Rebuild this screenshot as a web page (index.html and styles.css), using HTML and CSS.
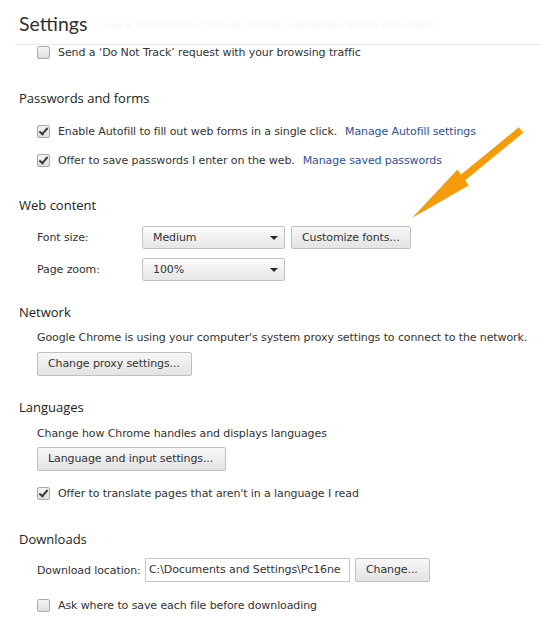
FILE: index.html
```html
<!DOCTYPE html>
<html>
<head>
<meta charset="utf-8">
<link rel="stylesheet" href="styles.css">
</head>
<body>
<div class="page">
  <header class="header">
    <h1 class="title">Settings</h1>
    <span class="ghost">Use a web service to help resolve navigation errors in Google</span>
  </header>

  <div class="content first">
    <label class="check-row dnt"><span class="cb"></span>Send a ‘Do Not Track’ request with your browsing traffic</label>
  </div>

  <section class="section s-pass">
    <h2 class="heading">Passwords and forms</h2>
    <div class="content">
      <div class="check-row r1"><span class="cb checked"></span>Enable Autofill to fill out web forms in a single click.<a class="link">Manage Autofill settings</a></div>
      <div class="check-row r2"><span class="cb checked"></span>Offer to save passwords I enter on the web.<a class="link">Manage saved passwords</a></div>
    </div>
  </section>

  <section class="section s-web">
    <h2 class="heading">Web content</h2>
    <div class="content">
      <div class="ctrl-row r1">
        <span class="label">Font size:</span>
        <span class="select">Medium<span class="caret"></span></span>
        <span class="btn btn-fonts">Customize fonts...</span>
      </div>
      <div class="ctrl-row r2">
        <span class="label">Page zoom:</span>
        <span class="select">100%<span class="caret"></span></span>
      </div>
    </div>
  </section>

  <section class="section s-net">
    <h2 class="heading">Network</h2>
    <div class="content">
      <div class="text-row t1">Google Chrome is using your computer's system proxy settings to connect to the network.</div>
      <div class="btn-row b1"><span class="btn">Change proxy settings...</span></div>
    </div>
  </section>

  <section class="section s-lang">
    <h2 class="heading">Languages</h2>
    <div class="content">
      <div class="text-row t2">Change how Chrome handles and displays languages</div>
      <div class="btn-row b2"><span class="btn">Language and input settings...</span></div>
      <div class="check-row r3"><span class="cb checked"></span>Offer to translate pages that aren't in a language I read</div>
    </div>
  </section>

  <section class="section s-down">
    <h2 class="heading">Downloads</h2>
    <div class="content">
      <div class="ctrl-row r3">
        <span class="dl-label">Download location:</span>
        <span class="input">C:\Documents and Settings\Pc16ne</span>
        <span class="btn btn-change">Change...</span>
      </div>
      <div class="check-row r4"><span class="cb"></span>Ask where to save each file before downloading</div>
    </div>
  </section>

  <svg class="arrow" width="542" height="626" viewBox="0 0 542 626" aria-hidden="true">
    <polygon points="518.8,127.3 523.2,132.7 465.2,180.2 468.5,185.5 412,218 457.5,169.5 460.8,174.8" fill="#f59c0c"/>
  </svg>
</div>
</body>
</html>
```

FILE: styles.css
```css
html, body {
  margin: 0;
  padding: 0;
  background: #fff;
}

.page {
  position: relative;
  width: 542px;
  height: 626px;
  overflow: hidden;
  font-family: "DejaVu Sans", Tahoma, sans-serif;
  font-size: 11px;
  letter-spacing: -0.1px;
  color: #333;
}

.header {
  position: relative;
  margin-left: 15px;
  padding-left: 4px;
  height: 45px;
  border-bottom: 1px solid #eaeaea;
  box-sizing: border-box;
  display: flex;
  align-items: flex-start;
}

.title {
  margin: 0;
  padding-top: 11px;
  font-family: Lato, "Open Sans", sans-serif;
  font-weight: 400;
  font-size: 19.5px;
  line-height: 26px;
  letter-spacing: 0;
  color: #303030;
}

.ghost {
  margin-left: 14px;
  padding-top: 18px;
  line-height: 14px;
  font-size: 11px;
  color: #f7f7f7;
  white-space: nowrap;
}

.section {
  padding-left: 19px;
}

.heading {
  margin: 0;
  height: 20px;
  line-height: 20px;
  font-family: "Open Sans", "Noto Sans", sans-serif;
  font-weight: 400;
  font-size: 13px;
  letter-spacing: 0;
  color: #222;
}

.content {
  padding-left: 18px;
}

.content.first {
  padding-left: 37px;
}

.check-row {
  display: flex;
  align-items: center;
  height: 20px;
  white-space: nowrap;
}

.check-row.dnt {
  height: 14px;
}

.cb {
  flex: none;
  width: 11px;
  height: 11px;
  margin-right: 8px;
  border: 1px solid #a9a9a9;
  border-radius: 2px;
  background: linear-gradient(#f4f4f4, #dedede);
  position: relative;
}

.cb.checked::after {
  content: "";
  position: absolute;
  left: 3px;
  top: 0px;
  width: 3px;
  height: 7px;
  border-right: 2px solid #3a3a3a;
  border-bottom: 2px solid #3a3a3a;
  transform: rotate(40deg);
}

.link {
  margin-left: 8px;
  color: #2f4f93;
  text-decoration: none;
}

.s-pass { padding-top: 29px; }
.s-pass .r1 { margin-top: 13px; }
.s-pass .r2 { margin-top: 9px; }

.s-web { padding-top: 25px; }
.ctrl-row {
  display: flex;
  align-items: center;
  height: 23px;
  white-space: nowrap;
}
.s-web .r1 { margin-top: 11px; }
.s-web .r2 { margin-top: 9px; }

.label {
  width: 105px;
  flex: none;
}

.select {
  position: relative;
  box-sizing: border-box;
  width: 143px;
  height: 23px;
  line-height: 21px;
  padding-left: 10px;
  border: 1px solid #c3c3c3;
  border-radius: 2px;
  background: linear-gradient(#fbfbfb, #e6e6e6);
  color: #333;
}

.caret {
  position: absolute;
  right: 6px;
  top: 9px;
  width: 0;
  height: 0;
  border-left: 4px solid transparent;
  border-right: 4px solid transparent;
  border-top: 4px solid #2a2a2a;
}

.btn {
  display: inline-block;
  box-sizing: border-box;
  height: 24px;
  line-height: 22px;
  padding: 0 10px;
  border: 1px solid #c0c0c0;
  border-radius: 2px;
  background: linear-gradient(#f7f7f7, #e3e3e3);
  color: #333;
  white-space: nowrap;
}

.btn-fonts {
  margin-left: 6px;
  width: 120px;
  height: 23px;
  line-height: 21px;
}

.text-row {
  height: 20px;
  line-height: 20px;
  white-space: nowrap;
}

.btn-row {
  display: flex;
  height: 24px;
}

.s-net { padding-top: 21px; }
.s-net .t1 { margin-top: 6px; }
.s-net .b1 { margin-top: 4px; }
.s-net .b1 .btn { width: 155px; }

.s-lang { padding-top: 21px; }
.s-lang .t2 { margin-top: 7px; }
.s-lang .b2 { margin-top: 3px; }
.s-lang .b2 .btn { width: 189px; }
.s-lang .r3 { margin-top: 12px; }

.s-down { padding-top: 26px; }
.s-down .r3 { margin-top: 9px; height: 24px; }
.s-down .r4 { margin-top: 13px; }

.dl-label {
  width: 108px;
  flex: none;
}

.input {
  box-sizing: border-box;
  width: 205px;
  height: 24px;
  line-height: 22px;
  padding-left: 3px;
  border: 1px solid #c6c6c6;
  background: #fff;
  overflow: hidden;
  white-space: nowrap;
}

.btn-change {
  margin-left: 5px;
  width: 75px;
}

.arrow {
  position: absolute;
  left: 0;
  top: 0;
  pointer-events: none;
}
```
